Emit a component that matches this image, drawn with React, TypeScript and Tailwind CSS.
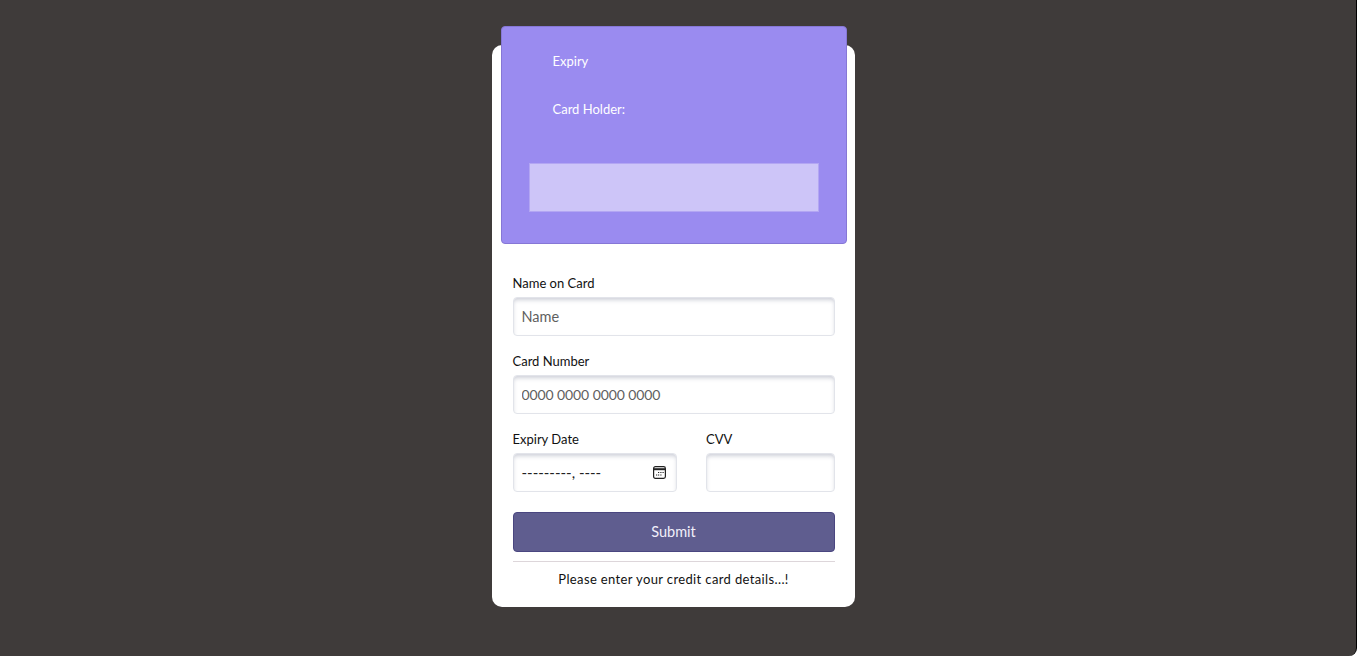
function Field({ label, placeholder, className, inputClass = 'text-[14.5px]' }: { label: string; placeholder?: string; className?: string; inputClass?: string }) {
  return (
    <div className={className}>
      <label className="block h-[24px] text-[13px] leading-[21px] text-[#111]">{label}</label>
      <input
        placeholder={placeholder}
        className={`block h-[39px] w-full rounded-[4px] border border-[#e2e4ea] bg-white px-2 text-[#444] shadow-[inset_0_3px_4px_-1px_rgba(90,95,125,0.3)] outline-none placeholder:text-[#5f5f5f] ${inputClass}`}
      />
    </div>
  )
}

export default function App() {
  return (
    <div className="h-[656px] overflow-hidden bg-white font-['Lato','Liberation_Sans',sans-serif]">
      <div className="flex h-full w-[1357px] justify-center rounded-br-[8px] border-r border-black bg-[#3f3b3a] pr-[9px] pt-[45px]">
        <div className="h-[562px] w-[363px] rounded-[10px] bg-white">
          <div className="mx-[8.5px] mt-[-19px] h-[218px] rounded-[4px] border border-[#8677d6] bg-[#9a8bf0] pt-[24px]">
            <p className="ml-[51px] h-[48px] text-[13px] leading-[20px] text-white">Expiry</p>
            <p className="ml-[51px] text-[13px] leading-[20px] text-white">Card Holder:</p>
            <div className="ml-[27px] mr-[26.5px] mt-[44px] h-[49px] border border-[#b3a6f3] bg-[#cdc5f8]" />
          </div>
          <form className="px-[20.5px] pt-[29px]">
            <Field label="Name on Card" placeholder="Name" />
            <Field label="Card Number" placeholder="0000 0000 0000 0000" className="mt-[15px]" inputClass="text-[14px] tracking-[-0.1px]" />
            <div className="mt-[15px] flex gap-[29.5px]">
              <div className="w-[164px]">
                <label className="block h-[24px] text-[13px] leading-[21px] text-[#111]">Expiry Date</label>
                <div className="flex h-[39px] items-center justify-between rounded-[4px] border border-[#e2e4ea] bg-white pl-2 pr-[10px] shadow-[inset_0_3px_4px_-1px_rgba(90,95,125,0.3)]">
                  <span className="text-[15px] text-[#222]">---------, ----</span>
                  <svg width="13" height="13" viewBox="0 0 13 13" fill="none">
                    <rect x="0.6" y="0.6" width="11.8" height="11.8" rx="1.8" stroke="#222" strokeWidth="1.2" />
                    <path d="M1 3.2h11" stroke="#222" strokeWidth="2" />
                    <path d="M5 6.5h1.2M7.3 6.5h1.2M9.5 6.5h1.2M3 9h1.2M5 9h1.2M7.3 9h1.2" stroke="#222" strokeWidth="1.2" />
                  </svg>
                </div>
              </div>
              <Field label="CVV" className="w-[128.5px]" />
            </div>
            <button type="button" className="mt-[20px] block h-[40px] w-full rounded-[4px] border border-[#4a4680] bg-[#5f5d8f] text-[14.5px] text-[#f1effa]">
              Submit
            </button>
            <div className="mt-[9px] border-t border-[#ddd6da] pt-[7px] text-center text-[13px] leading-[20px] tracking-[0.37px] text-[#111]">
              Please enter your credit card details...!
            </div>
          </form>
        </div>
      </div>
    </div>
  )
}
